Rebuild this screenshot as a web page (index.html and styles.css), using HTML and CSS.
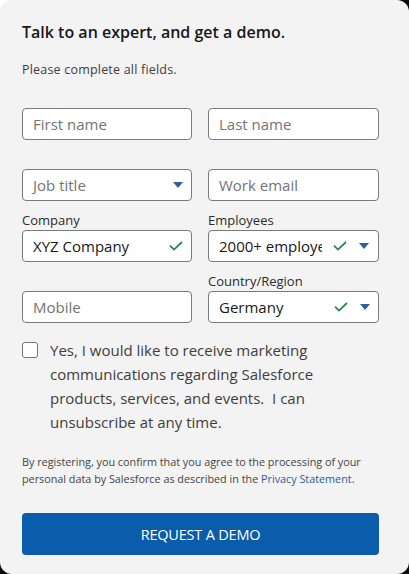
FILE: index.html
```html
<!DOCTYPE html>
<html lang="en">
<head>
<meta charset="utf-8">
<title>Request a demo</title>
<link rel="stylesheet" href="styles.css">
</head>
<body>
<div class="card">
  <h1 class="title">Talk to an expert, and get a demo.</h1>
  <p class="sub">Please complete all fields.</p>
  <div class="grid">
    <div class="cell">
      <div class="label"></div>
      <div class="field"><span class="ph">First name</span></div>
    </div>
    <div class="cell">
      <div class="label"></div>
      <div class="field"><span class="ph">Last name</span></div>
    </div>
    <div class="cell">
      <div class="label"></div>
      <div class="field"><span class="ph">Job title</span>
        <svg class="chev" width="10" height="6" viewBox="0 0 10 6"><path d="M0 0H10L5 6Z" fill="#2f5f9c"/></svg>
      </div>
    </div>
    <div class="cell">
      <div class="label"></div>
      <div class="field"><span class="ph">Work email</span></div>
    </div>
    <div class="cell">
      <div class="label">Company</div>
      <div class="field"><span class="val">XYZ Company</span>
        <svg class="check" width="14" height="10" viewBox="0 0 14 10"><path d="M1 4.6L5 8.6L13 1" fill="none" stroke="#2e844a" stroke-width="1.8"/></svg>
      </div>
    </div>
    <div class="cell">
      <div class="label">Employees</div>
      <div class="field"><span class="val clip">2000+ employees</span>
        <svg class="check" width="14" height="10" viewBox="0 0 14 10"><path d="M1 4.6L5 8.6L13 1" fill="none" stroke="#2e844a" stroke-width="1.8"/></svg>
        <svg class="chev gap" width="10" height="6" viewBox="0 0 10 6"><path d="M0 0H10L5 6Z" fill="#2f5f9c"/></svg>
      </div>
    </div>
    <div class="cell">
      <div class="label"></div>
      <div class="field"><span class="ph">Mobile</span></div>
    </div>
    <div class="cell">
      <div class="label">Country/Region</div>
      <div class="field"><span class="val">Germany</span>
        <svg class="check" width="14" height="10" viewBox="0 0 14 10"><path d="M1 4.6L5 8.6L13 1" fill="none" stroke="#2e844a" stroke-width="1.8"/></svg>
        <svg class="chev gap" width="10" height="6" viewBox="0 0 10 6"><path d="M0 0H10L5 6Z" fill="#2f5f9c"/></svg>
      </div>
    </div>
  </div>
  <div class="optin">
    <span class="box"></span>
    <p class="optin-text">Yes, I would like to receive marketing communications regarding Salesforce products, services, and events.&nbsp; I can unsubscribe at any time.</p>
  </div>
  <p class="legal">By registering, you confirm that you agree to the processing of your personal data by Salesforce as described in the <span class="link">Privacy Statement</span>.</p>
  <button class="cta">REQUEST A DEMO</button>
</div>
</body>
</html>
```

FILE: styles.css
```css
html, body {
  margin: 0;
  padding: 0;
}
body {
  width: 409px;
  height: 574px;
  background: conic-gradient(from 0deg at 50% 50%, #0c0c0c 0deg 270deg, #ffffff 270deg 360deg);
  font-family: "Open Sans", "Noto Sans", sans-serif;
  color: #181818;
}
.card {
  box-sizing: border-box;
  width: 409px;
  height: 574px;
  background: #f3f3f3;
  border-radius: 12px;
  padding: 22px 31px 0 22px;
  display: flex;
  flex-direction: column;
}
.title {
  margin: 0;
  font-size: 16px;
  line-height: 20px;
  font-weight: 600;
  color: #181818;
}
.sub {
  margin: 20px 0 0;
  font-size: 12.5px;
  line-height: 16px;
  letter-spacing: 0.2px;
  color: #3e3e3c;
}
.grid {
  margin-top: 12px;
  display: grid;
  grid-template-columns: 170px 171px;
  column-gap: 16px;
  row-gap: 11px;
}
.cell {
  display: flex;
  flex-direction: column;
  min-width: 0;
}
.label {
  height: 18px;
  font-size: 13px;
  line-height: 16px;
  color: #2b2b2b;
}
.field {
  box-sizing: border-box;
  height: 32px;
  background: #fff;
  border: 1px solid #7a7a7a;
  border-radius: 4px;
  display: flex;
  align-items: center;
  padding: 0 8px 0 10px;
  font-size: 15px;
  overflow: hidden;
}
.ph {
  flex: 1;
  color: #747474;
}
.val {
  flex: 1;
  min-width: 0;
  color: #181818;
  white-space: nowrap;
  overflow: hidden;
}
.clip {
  flex: 0 0 103px;
  width: 103px;
  margin-right: 9px;
}
.check {
  flex: none;
  margin-left: 2px;
}
.chev {
  flex: none;
}
.gap {
  margin-left: 12px;
}
.optin {
  margin-top: 16px;
  display: flex;
  align-items: flex-start;
}
.box {
  box-sizing: border-box;
  flex: none;
  width: 16px;
  height: 16px;
  margin-top: 3px;
  border: 1px solid #747474;
  border-radius: 3px;
  background: #fff;
}
.optin-text {
  margin: -1px 0 0 12px;
  width: 285px;
  font-size: 15px;
  line-height: 24px;
  color: #3e3e3c;
}
.legal {
  margin: 19px 0 0;
  font-size: 10.8px;
  line-height: 17px;
  color: #444;
}
.link {
  color: #2e5b9a;
}
.cta {
  margin-top: 26px;
  height: 42px;
  width: 357px;
  border: none;
  border-radius: 4px;
  background: #0b5cab;
  color: #fff;
  font-family: "Open Sans", "Noto Sans", sans-serif;
  font-size: 14.5px;
  letter-spacing: -0.2px;
}
```
